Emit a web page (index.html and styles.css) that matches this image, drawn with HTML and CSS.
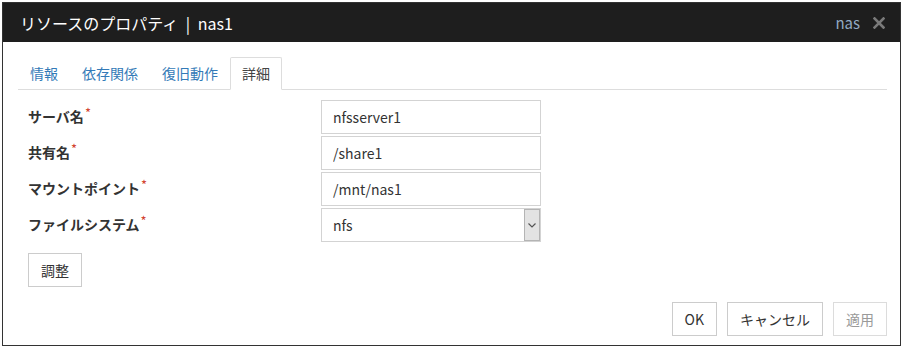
FILE: index.html
```html
<!doctype html>
<html lang="ja">
 <head>
  <meta charset="utf-8">
  <title>リソースのプロパティ</title>
  <link rel="stylesheet" href="styles.css">
 </head>
 <body>
 <div class="dialog">
   <div class="titlebar">
     <span class="title">リソースのプロパティ | nas1</span>
     <span class="server">nas</span>
     <svg class="close" width="12" height="12" viewBox="0 0 12 12">
       <path d="M1.5 1.5 L10.5 10.5 M10.5 1.5 L1.5 10.5" stroke="#7a7a7a" stroke-width="2.6" stroke-linecap="square"/>
     </svg>
   </div>
   <div class="content">
     <ul class="tabs">
       <li><a href="#">情報</a></li>
       <li><a href="#">依存関係</a></li>
       <li><a href="#">復旧動作</a></li>
       <li class="active"><a href="#">詳細</a></li>
     </ul>

     <div class="form">
       <label for="server">サーバ名<span class="req">*</span></label>
       <input type="text" id="server" value="nfsserver1">

       <label for="share">共有名<span class="req">*</span></label>
       <input type="text" id="share" value="/share1">

       <label for="mount">マウントポイント<span class="req">*</span></label>
       <input type="text" id="mount" value="/mnt/nas1">

       <label for="fs">ファイルシステム<span class="req">*</span></label>
       <div class="select">
         <select id="fs">
           <option>nfs</option>
         </select>
         <span class="arrow">
           <svg width="8" height="5" viewBox="0 0 8 5"><path d="M0.5 0.5 L4 4 L7.5 0.5" fill="none" stroke="#555" stroke-width="1.2"/></svg>
         </span>
       </div>
     </div>

     <button class="btn tune">調整</button>

     <div class="footer">
       <button class="btn">OK</button>
       <button class="btn">キャンセル</button>
       <button class="btn" disabled>適用</button>
     </div>
   </div>
 </div>
 </body>
</html>
```

FILE: styles.css
```css
body {
    margin: 0;
    background: #fff;
    color: #333;
    font-family: "Noto Sans CJK JP", sans-serif;
    font-size: 14px;
}

.dialog {
    margin: 2px 3px 3px 2px;
    border: 1px solid #333;
}

.titlebar {
    display: flex;
    align-items: center;
    height: 39px;
    padding: 0 15px 0 17px;
    background-color: #1e1e1e;
}
.title {
    flex: 1;
    color: #fff;
    font-size: 16px;
    word-spacing: 4px;
}
.server {
    margin-right: 13px;
    color: #93aac4;
    font-size: 15px;
}

.content {
    padding: 15px 13px 9px 15px;
}

/* tabs */
.tabs {
    display: flex;
    margin: 0;
    padding: 0;
    list-style: none;
    border-bottom: 1px solid #ddd;
}
.tabs li {
    margin-bottom: -1px;
}
.tabs a {
    display: block;
    box-sizing: border-box;
    height: 33px;
    line-height: 31px;
    padding: 0 11px;
    border: 1px solid transparent;
    border-radius: 2px 2px 0 0;
    color: #337ab7;
    text-decoration: none;
}
.tabs .active a {
    color: #444;
    background: #fff;
    border-color: #ddd #ddd #fff #ddd;
}

/* form */
.form {
    display: grid;
    grid-template-columns: 293px 220px;
    row-gap: 2px;
    margin: 10px 0 0 10px;
}
.form label {
    line-height: 32px;
    padding-bottom: 2px;
    font-weight: bold;
    color: #333;
}
.req {
    margin-left: 1px;
    color: #d2432f;
    font-size: 13px;
    font-weight: normal;
    line-height: 0;
    vertical-align: 4px;
}
.form input,
.form select {
    box-sizing: border-box;
    width: 100%;
    height: 34px;
    margin: 0;
    padding: 0 11px 1px;
    border: 1px solid #d3d3d3;
    background: #fff;
    color: #333;
    font: inherit;
    outline: none;
}
.select {
    position: relative;
}
.form select {
    appearance: none;
    -webkit-appearance: none;
    border-radius: 0;
}
.arrow {
    position: absolute;
    top: 1px;
    right: 1px;
    bottom: 1px;
    width: 16px;
    display: flex;
    align-items: center;
    justify-content: center;
    box-sizing: border-box;
    border: 1px solid #b4b4b4;
    background: #e3e3e3;
    pointer-events: none;
}

/* buttons */
.btn {
    box-sizing: border-box;
    height: 34px;
    padding: 0 12px;
    border: 1px solid #ccc;
    border-radius: 0;
    background: #fff;
    color: #333;
    font: inherit;
}
.btn:disabled {
    color: #9a9a9a;
    border-color: #dcdcdc;
}
.tune {
    display: block;
    margin: 11px 0 0 10px;
}

.footer {
    display: flex;
    justify-content: flex-end;
    gap: 10px;
    margin-top: 15px;
}
```
